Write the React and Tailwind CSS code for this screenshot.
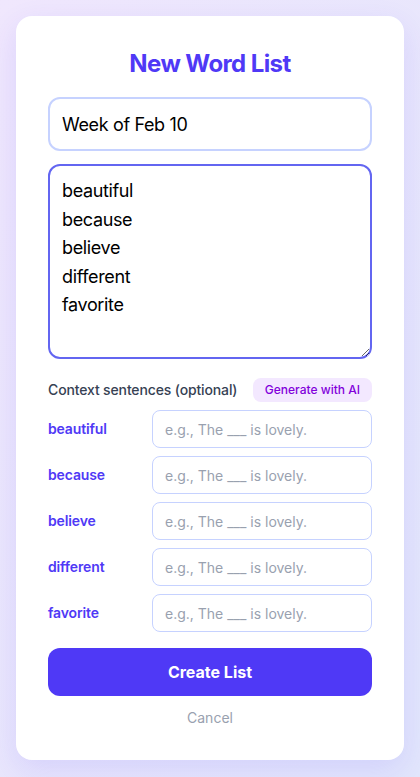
import React from "react";

const words = ["beautiful", "because", "believe", "different", "favorite"];

export default function App() {
  return (
    <div
      className="min-h-[777px] w-full bg-gradient-to-br from-[#f0e7fd] to-[#e2e6fc] p-4"
      style={{ fontFamily: "Inter, 'Noto Sans', sans-serif" }}
    >
      <div className="flex flex-col rounded-2xl bg-white px-8 pt-8 pb-8 shadow-[0_10px_30px_rgba(79,57,246,0.12)]">
        <h1 className="h-8 text-center text-2xl leading-8 font-bold tracking-[-0.025em] text-[#4f39f6]">
          New Word List
        </h1>
        <input
          className="mt-[17px] h-[54px] w-full rounded-xl border-2 border-[#c6d2ff] px-3 text-lg tracking-[-0.02em] text-black outline-none"
          defaultValue="Week of Feb 10"
        />
        <textarea
          className="mt-[13px] h-[195px] w-full rounded-xl border-2 border-[#6366f1] px-3 pt-[11px] text-lg leading-[28.5px] tracking-[-0.02em] text-black outline-none"
          defaultValue={words.join("\n")}
        />
        <div className="mt-[19px] flex h-6 items-center justify-between">
          <span className="text-sm font-medium tracking-[-0.01em] text-[#364153]">
            Context sentences (optional)
          </span>
          <button className="h-6 rounded-lg bg-[#f3e8ff] px-3 text-xs font-medium text-[#8200db]">
            Generate with AI
          </button>
        </div>
        <div className="mt-2 flex flex-col gap-2">
          {words.map((w) => (
            <div key={w} className="flex items-center gap-2">
              <span className="w-24 shrink-0 text-sm font-semibold tracking-[-0.01em] text-[#4f39f6]">
                {w}
              </span>
              <input
                className="h-[38px] min-w-0 flex-1 rounded-lg border border-[#c6d2ff] px-3 text-sm outline-none placeholder:text-[#99a1af]"
                placeholder="e.g., The ___ is lovely."
              />
            </div>
          ))}
        </div>
        <button className="mt-4 h-12 w-full rounded-xl bg-[#4f39f6] text-base font-bold text-white">
          Create List
        </button>
        <button className="mt-3 h-5 text-sm text-[#99a1af]">Cancel</button>
      </div>
    </div>
  );
}
